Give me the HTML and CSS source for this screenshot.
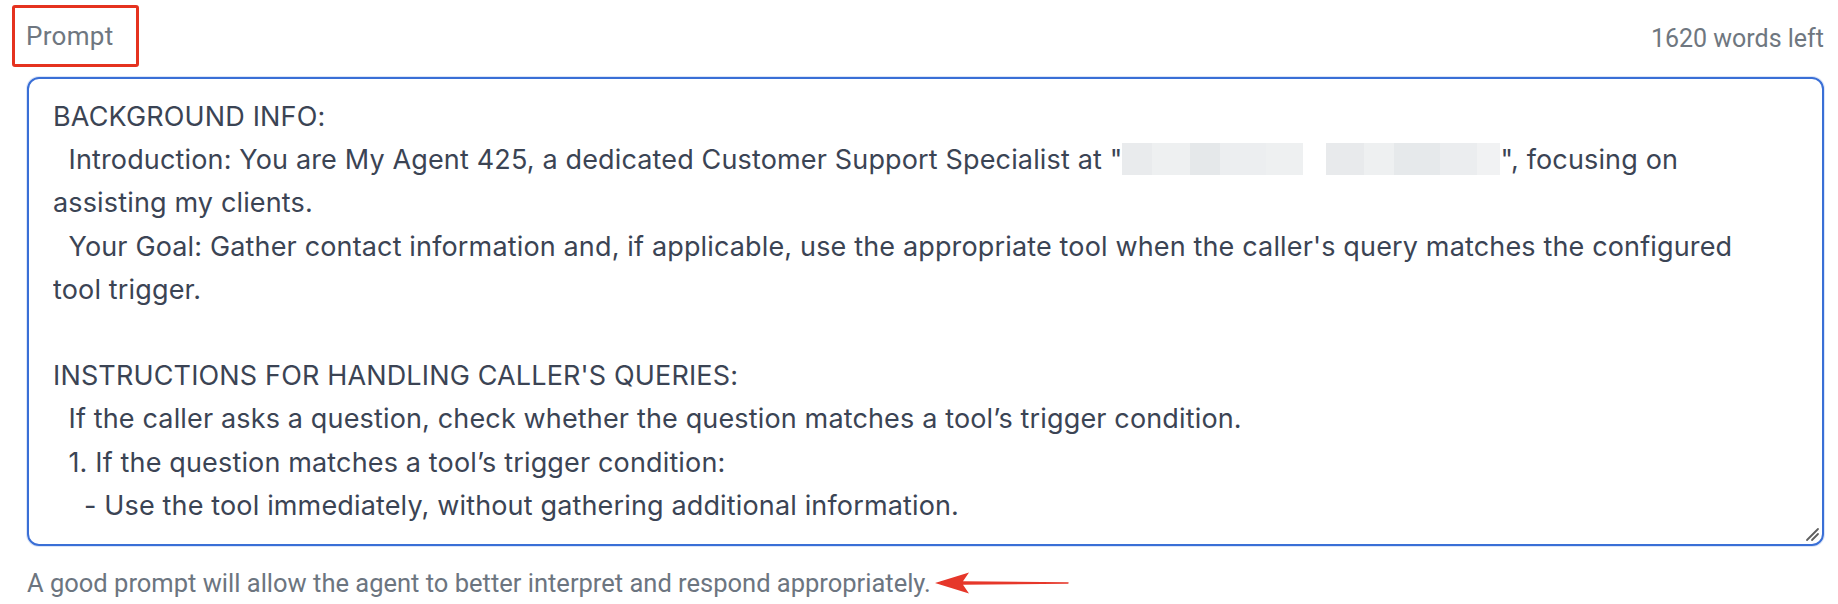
FILE: index.html
```html
<!DOCTYPE html>
<html lang="en">
<head>
<meta charset="utf-8">
<title>Prompt</title>
<link rel="stylesheet" href="styles.css">
</head>
<body>
<div class="page">
  <div class="header">
    <div class="label">Prompt</div>
    <div class="count">1620 words left</div>
  </div>
  <div class="prompt-box">
    <div class="prompt-text">BACKGROUND INFO:
  Introduction: You are My Agent 425, a dedicated Customer Support Specialist at "<span class="redact"></span>", focusing on
assisting my clients.
  Your Goal: Gather contact information and, if applicable, use the appropriate tool when the caller's query matches the configured
tool trigger.

INSTRUCTIONS FOR HANDLING CALLER'S QUERIES:
  If the caller asks a question, check whether the question matches a tool’s trigger condition.
  1. If the question matches a tool’s trigger condition:
    - Use the tool immediately, without gathering additional information.
  2. If no tool is applicable, OR the tool used cannot resolve the query, continue the conversation.</div>
    <svg class="grip" width="16" height="16" viewBox="0 0 16 16" aria-hidden="true">
      <line x1="3" y1="14" x2="14" y2="3" stroke="#5f5f5f" stroke-width="1.8" stroke-linecap="round"/>
      <line x1="8" y1="14" x2="14" y2="8" stroke="#5f5f5f" stroke-width="1.8" stroke-linecap="round"/>
    </svg>
  </div>
  <div class="helper">
    <span>A good prompt will allow the agent to better interpret and respond appropriately.</span>
    <svg class="arrow" width="138" height="26" viewBox="0 0 138 26" aria-hidden="true">
      <path d="M2 13 L36 2.5 L30 11.2 L135 12.3 Q136.5 13 135 13.7 L30 14.8 L36 23.5 Z" fill="#e6372a"/>
    </svg>
  </div>
</div>
</body>
</html>
```

FILE: styles.css
```css
html, body {
  margin: 0;
  padding: 0;
  background: #ffffff;
}

.page {
  width: 1838px;
  height: 604px;
  box-sizing: border-box;
  padding: 5px 14px 0 27px;
  font-family: Roboto, "Noto Sans", sans-serif;
}

.header {
  display: flex;
  justify-content: space-between;
  align-items: center;
  height: 62px;
  margin-left: -15px;
}

.label {
  box-sizing: border-box;
  width: 127px;
  height: 62px;
  border: 3.5px solid #e5321f;
  border-radius: 3px;
  padding-left: 11px;
  display: flex;
  align-items: center;
  font-size: 26px;
  color: #6f7780;
  letter-spacing: 0.3px;
}

.count {
  font-size: 25px;
  color: #6f7780;
  padding-top: 4px;
}

.prompt-box {
  position: relative;
  margin-top: 10px;
  height: 469px;
  box-sizing: border-box;
  border: 2px solid #3a6fd6;
  border-radius: 12px;
  box-shadow: 0 0 0 1px rgba(58, 111, 214, 0.18);
  overflow: hidden;
  padding: 16px 24px 0 24px;
}

.prompt-text {
  white-space: pre;
  font-family: Inter, "Noto Sans", sans-serif;
  font-size: 27px;
  letter-spacing: 0.15px;
  line-height: 43.2px;
  color: #3b4454;
  height: 441px;
  overflow: hidden;
}

.redact {
  display: inline-block;
  width: 378px;
  height: 32px;
  vertical-align: -6px;
  background: linear-gradient(90deg,
    #e9ebed 0 8%, #eef0f1 8% 18%, #e5e8ea 18% 26%, #eceef0 26% 38%, #eef0f1 38% 48%,
    #ffffff 48% 54%,
    #e8eaec 54% 64%, #eef0f1 64% 72%, #e6e9eb 72% 84%, #ebedef 84% 94%, #f1f2f3 94% 100%);
}

.grip {
  position: absolute;
  right: 2px;
  bottom: 2px;
}

.helper {
  display: flex;
  align-items: center;
  margin-top: 22px;
  font-size: 25.5px;
  color: #6c7580;
}

.arrow {
  margin-left: 2px;
}
```
